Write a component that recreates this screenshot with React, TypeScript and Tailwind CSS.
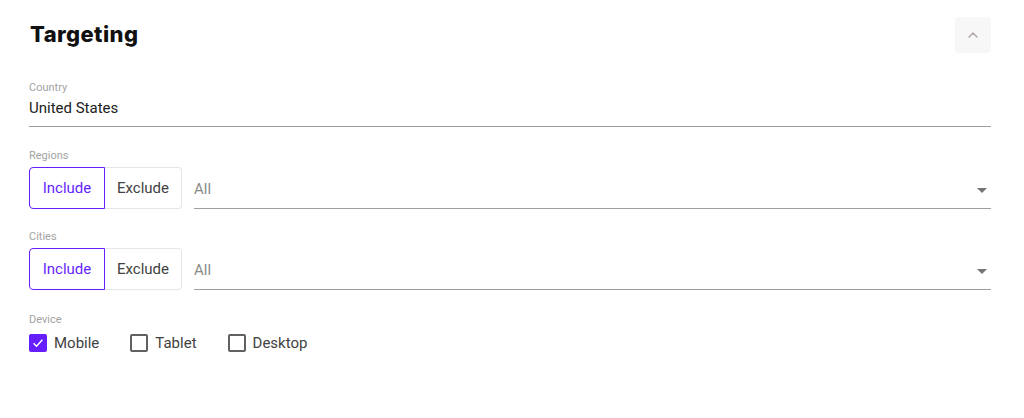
import { ChevronUp } from 'lucide-react';

const roboto = { fontFamily: 'Roboto, "Liberation Sans", sans-serif' };

function SegmentedSelect({ label, top }: { label: string; top: string }) {
  return (
    <div className={top}>
      <div className="text-[11px] leading-[13px] text-[#a3a3a3]">{label}</div>
      <div className="mt-[5px] flex items-stretch">
        <div className="flex h-[42px]">
          <button className="w-[76px] rounded-l-[4px] border border-[#651fff] text-[15px] text-[#651fff]">
            Include
          </button>
          <button className="w-[77px] rounded-r-[4px] border border-l-0 border-[#e6e6e6] text-[15px] text-[#424242]">
            Exclude
          </button>
        </div>
        <div className="ml-[12px] flex flex-1 items-center justify-between border-b border-[#9e9e9e] pr-[4px]">
          <span className="pt-[3px] text-[15px] text-[#8a8a8a]">All</span>
          <svg width="10" height="5" viewBox="0 0 10 5" className="mt-[6px]">
            <path d="M0 0h10L5 5z" fill="#757575" />
          </svg>
        </div>
      </div>
    </div>
  );
}

function Check({ label, checked }: { label: string; checked?: boolean }) {
  return (
    <label className="flex items-center gap-[7px]">
      {checked ? (
        <span className="flex h-[18px] w-[18px] items-center justify-center rounded-[2px] bg-[#651fff]">
          <svg width="14" height="14" viewBox="0 0 24 24">
            <path d="M4.5 12.5l5 5 10-11" fill="none" stroke="#fff" strokeWidth="2.4" />
          </svg>
        </span>
      ) : (
        <span className="h-[18px] w-[18px] rounded-[2px] border-2 border-[#616161]" />
      )}
      <span className="text-[15px] text-[#424242]">{label}</span>
    </label>
  );
}

export default function App() {
  return (
    <div className="h-[418px] w-[1024px] bg-white pl-[29px] pr-[33px] pt-[17px]" style={roboto}>
      <div className="flex items-start justify-between">
        <h2
          className="ml-[1px] mt-[2px] text-[22px] font-extrabold leading-[30px] tracking-[0.4px] text-[#111]"
          style={{ fontFamily: 'Inter, "Open Sans", sans-serif' }}
        >
          Targeting
        </h2>
        <button className="flex h-[36px] w-[36px] items-center justify-center rounded-[4px] bg-[#f7f7f7]">
          <ChevronUp size={16} color="#b5a9ad" strokeWidth={2.4} />
        </button>
      </div>

      <div className="mt-[28px]">
        <div className="text-[11px] leading-[13px] text-[#a3a3a3]">Country</div>
        <div className="mt-[5px] border-b border-[#9e9e9e] pb-[9px] text-[15px] leading-[18px] text-[#212121]">
          United States
        </div>
      </div>

      <SegmentedSelect label="Regions" top="mt-[22px]" />
      <SegmentedSelect label="Cities" top="mt-[21px]" />

      <div className="mt-[23px]">
        <div className="text-[11px] leading-[13px] text-[#a3a3a3]">Device</div>
        <div className="mt-[6px] flex gap-[31px]">
          <Check label="Mobile" checked />
          <Check label="Tablet" />
          <Check label="Desktop" />
        </div>
      </div>
    </div>
  );
}
